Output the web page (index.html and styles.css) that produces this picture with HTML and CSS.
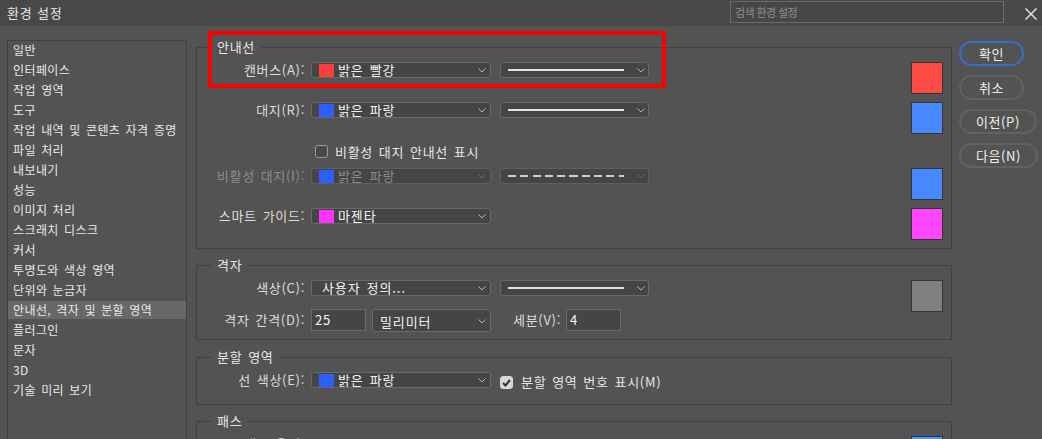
FILE: index.html
```html
<!DOCTYPE html>
<html lang="ko">
<head>
  <meta charset="UTF-8">
  <title>환경 설정</title>
  <link rel="stylesheet" href="styles.css">
</head>
<body>
  <div class="titlebar">
    <div class="title">환경 설정</div>
    <div class="search">검색 환경 설정</div>
    <svg class="close" width="12" height="12" viewBox="0 0 12 12">
      <path d="M0.5 0.5 L11.5 11.5 M11.5 0.5 L0.5 11.5" stroke="#e2e2e2" stroke-width="1.5" fill="none"/>
    </svg>
  </div>

  <div class="main">
    <ul class="nav">
      <li>일반</li>
      <li>인터페이스</li>
      <li>작업 영역</li>
      <li>도구</li>
      <li>작업 내역 및 콘텐츠 자격 증명</li>
      <li>파일 처리</li>
      <li>내보내기</li>
      <li>성능</li>
      <li>이미지 처리</li>
      <li>스크래치 디스크</li>
      <li>커서</li>
      <li>투명도와 색상 영역</li>
      <li>단위와 눈금자</li>
      <li class="active">안내선, 격자 및 분할 영역</li>
      <li>플러그인</li>
      <li>문자</li>
      <li>3D</li>
      <li>기술 미리 보기</li>
    </ul>

    <div class="panel">
      <fieldset class="group guides">
        <legend>안내선</legend>
        <div class="row h40">
          <span class="lbl">캔버스(A):</span>
          <div class="select"><i class="chip red"></i>밝은 빨강<svg class="chev" width="8" height="5" viewBox="0 0 8 5"><polyline points="0.5,0.5 4,4 7.5,0.5" fill="none" stroke="#b4b4b4"/></svg></div>
          <div class="select line"><span class="stroke"></span><svg class="chev" width="8" height="5" viewBox="0 0 8 5"><polyline points="0.5,0.5 4,4 7.5,0.5" fill="none" stroke="#b4b4b4"/></svg></div>
          <span class="swatch s-red"></span>
        </div>
        <div class="row h40">
          <span class="lbl">대지(R):</span>
          <div class="select"><i class="chip blue"></i>밝은 파랑<svg class="chev" width="8" height="5" viewBox="0 0 8 5"><polyline points="0.5,0.5 4,4 7.5,0.5" fill="none" stroke="#b4b4b4"/></svg></div>
          <div class="select line"><span class="stroke"></span><svg class="chev" width="8" height="5" viewBox="0 0 8 5"><polyline points="0.5,0.5 4,4 7.5,0.5" fill="none" stroke="#b4b4b4"/></svg></div>
          <span class="swatch s-blue"></span>
        </div>
        <div class="row h26 check-row">
          <span class="check"></span>
          <span class="check-text">비활성 대지 안내선 표시</span>
        </div>
        <div class="row h40 disabled">
          <span class="lbl">비활성 대지(I):</span>
          <div class="select"><i class="chip blue"></i>밝은 파랑<svg class="chev" width="8" height="5" viewBox="0 0 8 5"><polyline points="0.5,0.5 4,4 7.5,0.5" fill="none" stroke="#6c6c6c"/></svg></div>
          <div class="select line"><span class="stroke dashed"></span><svg class="chev" width="8" height="5" viewBox="0 0 8 5"><polyline points="0.5,0.5 4,4 7.5,0.5" fill="none" stroke="#6c6c6c"/></svg></div>
          <span class="swatch s-blue"></span>
        </div>
        <div class="row h32">
          <span class="lbl">스마트 가이드:</span>
          <div class="select"><i class="chip magenta"></i>마젠타<svg class="chev" width="8" height="5" viewBox="0 0 8 5"><polyline points="0.5,0.5 4,4 7.5,0.5" fill="none" stroke="#b4b4b4"/></svg></div>
          <span class="swatch s-magenta"></span>
        </div>
      </fieldset>

      <fieldset class="group grid">
        <legend>격자</legend>
        <div class="row h29">
          <span class="lbl">색상(C):</span>
          <div class="select custom">사용자 정의...<svg class="chev" width="8" height="5" viewBox="0 0 8 5"><polyline points="0.5,0.5 4,4 7.5,0.5" fill="none" stroke="#b4b4b4"/></svg></div>
          <div class="select line"><span class="stroke"></span><svg class="chev" width="8" height="5" viewBox="0 0 8 5"><polyline points="0.5,0.5 4,4 7.5,0.5" fill="none" stroke="#b4b4b4"/></svg></div>
          <span class="swatch s-gray"></span>
        </div>
        <div class="row h24">
          <span class="lbl lbl-mid">격자 간격(D):</span>
          <div class="field">25</div>
          <div class="select units">밀리미터<svg class="chev" width="8" height="5" viewBox="0 0 8 5"><polyline points="0.5,0.5 4,4 7.5,0.5" fill="none" stroke="#b4b4b4"/></svg></div>
          <span class="sub-lbl">세분(V):</span>
          <div class="field">4</div>
        </div>
      </fieldset>

      <fieldset class="group slices">
        <legend>분할 영역</legend>
        <div class="row">
          <span class="lbl">선 색상(E):</span>
          <div class="select"><i class="chip blue"></i>밝은 파랑<svg class="chev" width="8" height="5" viewBox="0 0 8 5"><polyline points="0.5,0.5 4,4 7.5,0.5" fill="none" stroke="#b4b4b4"/></svg></div>
          <span class="check on"><svg width="9" height="8" viewBox="0 0 9 8"><polyline points="1,4 3.5,6.5 8,1" fill="none" stroke="#2e2e2e" stroke-width="2"/></svg></span>
          <span class="check-text">분할 영역 번호 표시(M)</span>
        </div>
      </fieldset>

      <fieldset class="group paths">
        <legend>패스</legend>
        <div class="row">
          <span class="lbl">패스 옵션:</span>
          <div class="select"><i class="chip sky"></i>하늘색<svg class="chev" width="8" height="5" viewBox="0 0 8 5"><polyline points="0.5,0.5 4,4 7.5,0.5" fill="none" stroke="#b4b4b4"/></svg></div>
          <div class="spin"><span class="spin-val">1 픽셀</span><span class="spin-btn"></span></div>
          <span class="swatch s-sky"></span>
        </div>
      </fieldset>
    </div>

    <div class="buttons">
      <div class="btn primary">확인</div>
      <div class="btn">취소</div>
      <div class="btn">이전(P)</div>
      <div class="btn">다음(N)</div>
    </div>
  </div>

  <div class="callout"></div>
</body>
</html>
```

FILE: styles.css
```css
* {
  box-sizing: border-box;
}

html, body {
  margin: 0;
  height: 100%;
}

body {
  position: relative;
  overflow: hidden;
  background: #535353;
  color: #e4e4e4;
  font-family: "Noto Sans CJK KR", "Noto Sans", sans-serif;
  font-size: 12px;
  line-height: 16px;
}

/* title bar */
.titlebar {
  display: flex;
  align-items: flex-start;
  height: 26px;
  background: #484848;
}

.title {
  padding-left: 7px;
  font-size: 13px;
  letter-spacing: 0.8px;
  line-height: 26px;
  color: #e8e8e8;
}

.search {
  margin: 1px 0 0 auto;
  width: 274px;
  height: 22px;
  padding-left: 4px;
  border: 1px solid #6a6a6a;
  background: #474747;
  color: #8e8e8e;
  font-size: 11px;
  letter-spacing: -0.6px;
  line-height: 20px;
}

.close {
  margin: 8px 5px 0 21px;
}

/* body */
.main {
  display: flex;
  align-items: flex-start;
  padding-left: 7px;
}

.nav {
  list-style: none;
  margin: 14px 0 0;
  padding: 0;
  width: 180px;
  height: 420px;
  border: 1px solid #424242;
}

.nav li {
  height: 18px;
  margin-bottom: 2px;
  padding-left: 5px;
  line-height: 18px;
  letter-spacing: 0.4px;
  word-spacing: 1.5px;
  color: #e8e8e8;
  white-space: nowrap;
}

.nav li.active {
  background: #686868;
}

.panel {
  margin: 13px 0 0 9px;
  width: 756px;
  font-size: 13px;
  letter-spacing: 0.7px;
  word-spacing: 1.5px;
}

.group {
  margin: 0;
  min-width: 0;
  padding: 7px 8px 8px 0;
  border: 1px solid #414141;
}

.group legend {
  margin-left: 14px;
  padding: 0 6px;
  line-height: 16px;
  color: #e6e6e6;
}

.grid {
  margin-top: 8px;
  padding-bottom: 6px;
}

.slices {
  margin-top: 9px;
  padding-bottom: 12px;
}

.paths {
  margin-top: 8px;
  padding-bottom: 20px;
}

.row {
  display: flex;
  align-items: flex-start;
}

.h40 { height: 40px; }
.h32 { height: 32px; }
.h29 { height: 29px; }
.h26 { height: 26px; }
.h24 { height: 24px; }

.lbl {
  width: 108px;
  margin-right: 6px;
  text-align: right;
  white-space: nowrap;
  color: #dcdcdc;
}

.lbl-mid,
.sub-lbl {
  line-height: 22px;
}

.sub-lbl {
  width: 47px;
  margin: 0 6px 0 22px;
  text-align: right;
  white-space: nowrap;
  color: #dcdcdc;
}

.select {
  display: flex;
  align-items: center;
  width: 180px;
  height: 16px;
  padding: 0 4px 0 7px;
  border: 1px solid #686868;
  border-radius: 3px;
  background: #454545;
  color: #f2f2f2;
  font-size: 13px;
  letter-spacing: 0.9px;
  line-height: 14px;
  white-space: nowrap;
}

.select .chev {
  margin-left: auto;
  flex: none;
}

.select.custom {
  padding-left: 10px;
}

.select.units {
  width: 119px;
  height: 23px;
  margin-left: 6px;
  padding-top: 2px;
}

.select.line {
  width: 149px;
  margin-left: 9px;
  padding: 0 3px 0 7px;
}

.stroke {
  width: 116px;
  height: 2px;
  background: #e2e2e2;
}

.stroke.dashed {
  background: repeating-linear-gradient(90deg, #cfcfcf 0 8px, transparent 8px 12.3px);
}

.chip {
  flex: none;
  width: 15px;
  height: 13px;
  margin-right: 4px;
}

.chip.red { background: #ff3c3c; }
.chip.blue { background: #2d5fff; }
.chip.magenta { background: #ff33ff; }
.chip.sky { background: #1e7bff; }

.swatch {
  flex: none;
  width: 32px;
  height: 32px;
  margin-left: auto;
  border: 1px solid #353535;
}

.s-red { background: #ff4b46; }
.s-blue { background: #4787ff; }
.s-magenta { background: #ff45ff; }
.s-gray { background: #808080; }
.s-sky { background: #3f9bff; }

.disabled .lbl,
.disabled .select {
  color: #8c8c8c;
}

.disabled .select {
  border-color: #5f5f5f;
}

.check-row {
  padding-top: 2px;
}

.check {
  flex: none;
  display: flex;
  align-items: center;
  justify-content: center;
  width: 13px;
  height: 13px;
  border: 1px solid #9a9a9a;
  border-radius: 3px;
  background: #484848;
}

.check-row .check {
  margin: 1px 0 0 118px;
}

.check.on {
  margin: 4px 0 0 9px;
  border-color: #d8d8d8;
  background: #d8d8d8;
}

.check-text {
  margin-left: 7px;
  color: #e6e6e6;
  white-space: nowrap;
}

.slices .check-text {
  margin-left: 8px;
  line-height: 20px;
}

.field {
  width: 55px;
  height: 22px;
  padding-left: 3px;
  border: 1px solid #6a6a6a;
  background: #454545;
  color: #f6f6f6;
  font-size: 13px;
  line-height: 20px;
}

.paths .select,
.paths .spin {
  margin-top: 3px;
}

.spin {
  display: flex;
  width: 79px;
  height: 18px;
  margin-left: 9px;
  border: 1px solid #686868;
  border-radius: 3px;
  background: #454545;
}

.spin-val {
  flex: 1;
  padding-left: 6px;
  font-size: 13px;
  line-height: 16px;
}

.spin-btn {
  width: 14px;
  border-left: 1px solid #686868;
}

/* buttons */
.buttons {
  display: flex;
  flex-direction: column;
  align-items: flex-start;
  gap: 9px;
  margin: 15px 0 0 7px;
}

.btn {
  min-width: 65px;
  height: 25px;
  padding: 0 15px;
  border: 2px solid #626262;
  border-radius: 13px;
  color: #f0f0f0;
  font-size: 13px;
  letter-spacing: 0.6px;
  line-height: 21px;
  text-align: center;
  white-space: nowrap;
}

.btn.primary {
  border-color: #3a6ccc;
}

/* red annotation frame drawn over the guides section */
.callout {
  position: absolute;
  left: 208px;
  top: 31px;
  width: 458px;
  height: 57px;
  border: 4px solid #ff0000;
}
```
